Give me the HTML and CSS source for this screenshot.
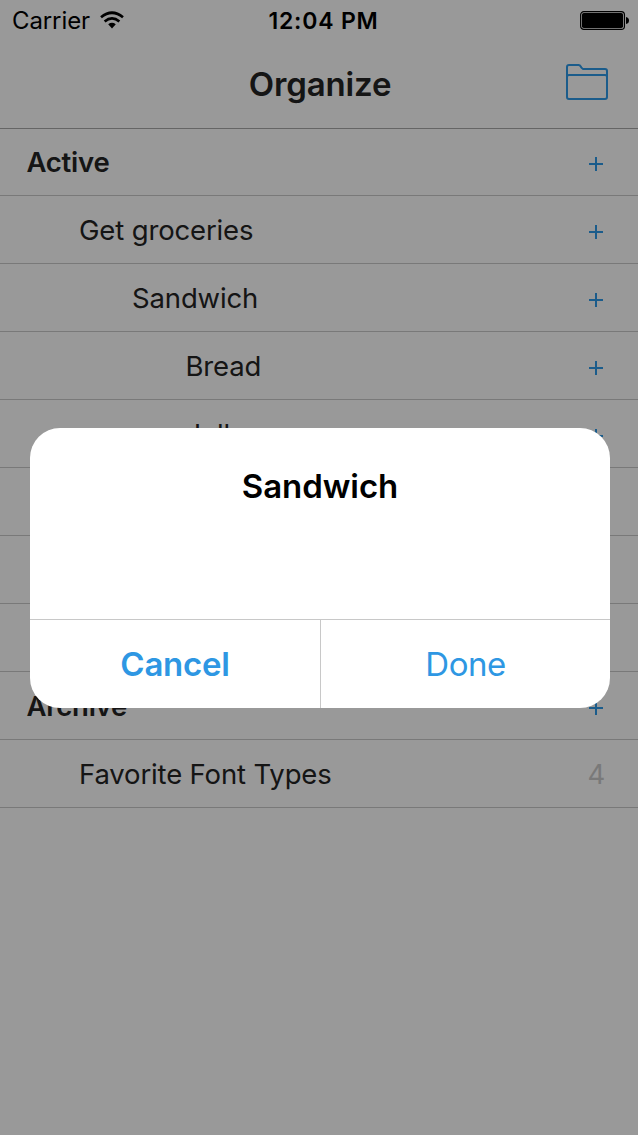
FILE: index.html
```html
<!DOCTYPE html>
<html lang="en">
<head>
<meta charset="utf-8">
<title>Organize</title>
<link rel="stylesheet" href="styles.css">
</head>
<body>
<div class="screen">
  <div class="status">
    <div class="carrier"><span>Carrier</span>
      <svg class="wifi" width="24" height="18" viewBox="0 0 26 19.5"><g fill="none" stroke="#000" stroke-width="2.9"><path d="M1.1 6.8Q13 -3 24.9 6.8"/><path d="M5 11.3Q13 4.8 21 11.3"/></g><path d="M8.9 14.4Q13 11.2 17.1 14.4L13 19Z"/></svg>
    </div>
    <div class="time">12:04 PM</div>
    <svg class="battery" width="50" height="20" viewBox="0 0 50 20"><rect x=".65" y=".65" width="43.8" height="17.8" rx="3.2" fill="none" stroke="#000" stroke-width="1.2"/><rect x="2" y="2" width="41" height="15" rx="1.8"/><path d="M46 6Q49 6.5 49 9.5T46 13Z"/></svg>
  </div>
  <header class="navbar">
    <h1>Organize</h1>
    <svg class="folder" width="44" height="38" viewBox="0 0 44 38" fill="none" stroke="#2d9ae8" stroke-width="2"><path d="M2 34V4Q2 2 4 2H13.5Q15 2 15.7 3.5T18 6H40Q42 6 42 8V34Q42 36 40 36H4Q2 36 2 34ZM2 14Q2 12 4 12H40Q42 12 42 14"/></svg>
  </header>
  <ul class="list">
    <li class="row group"><span>Active</span><i class="plus"></i></li>
    <li class="row l1"><span>Get groceries</span><i class="plus"></i></li>
    <li class="row l2"><span>Sandwich</span><i class="plus"></i></li>
    <li class="row l3"><span>Bread</span><i class="plus"></i></li>
    <li class="row l3"><span>Jelly</span><i class="plus"></i></li>
    <li class="row"></li>
    <li class="row"></li>
    <li class="row"></li>
    <li class="row group"><span>Archive</span><i class="plus"></i></li>
    <li class="row l1"><span>Favorite Font Types</span><b class="count">4</b></li>
  </ul>
</div>
<div class="overlay">
  <div class="dialog">
    <div class="dialog-title">Sandwich</div>
    <div class="actions">
      <button class="cancel">Cancel</button>
      <button class="done">Done</button>
    </div>
  </div>
</div>
</body>
</html>
```
FILE: styles.css
```css
* { box-sizing: border-box; }
body { margin: 0; background: #fff; font-family: Inter, "Liberation Sans", sans-serif; overflow: hidden; }
.screen { height: 1135px; color: #242424; }
.status { height: 40px; padding: 0 8px 0 12px; display: grid; grid-template-columns: 1fr auto 1fr; align-items: start; color: #000; font-size: 24px; line-height: 41px; }
.carrier { display: flex; align-items: flex-start; gap: 10px; letter-spacing: -.1px; }
.wifi { margin-top: 11px; }
.time { font-weight: 600; font-size: 23px; line-height: 42px; letter-spacing: .8px; padding-left: 5px; }
.battery { justify-self: end; margin-top: 11px; }
.navbar { height: 89px; border-bottom: 1px solid #a9a9a9; display: grid; grid-template-columns: 1fr auto 1fr; align-items: center; padding-right: 29px; padding-left: 31px; }
.navbar h1 { grid-column: 2; margin: 0; font-size: 33px; font-weight: 600; line-height: 88px; letter-spacing: -.15px; }
.folder { justify-self: end; margin-top: -5px; }
.list { list-style: none; margin: 0; padding: 0; }
.row { height: 68px; border-bottom: 1px solid #cacaca; padding: 0 35px 0 27px; display: flex; align-items: flex-start; justify-content: space-between; font-size: 27.5px; line-height: 68px; letter-spacing: -.15px; }
.row:first-child { height: 67px; line-height: 66px; }
.row:first-child .plus { margin-top: 28px; }
.group { font-weight: 600; letter-spacing: -.25px; padding-left: 26.5px; }
.l1 { padding-left: 79px; }
.l2 { padding-left: 132px; }
.l3 { padding-left: 185.5px; }
.plus { width: 14px; height: 14px; margin-top: 29px; background: linear-gradient(#2d9ae8, #2d9ae8) center / 14px 2px no-repeat, linear-gradient(#2d9ae8, #2d9ae8) center / 2px 14px no-repeat; }
.count { color: #cacaca; font-weight: 400; margin-right: -2px; }
.overlay { position: absolute; inset: 0; height: 1135px; background: rgba(0, 0, 0, .4); padding: 428px 28px 0 30px; }
.dialog { height: 280px; border-radius: 30px; background: #fff; overflow: hidden; display: flex; flex-direction: column; color: #000; }
.dialog-title { flex: 1; padding-top: 37px; text-align: center; font-size: 33px; line-height: 42px; font-weight: 600; letter-spacing: -.05px; }
.actions { height: 89px; border-top: 1px solid #c8c8c8; display: grid; grid-template-columns: 291px 1fr; }
.actions button { border: 0; padding: 0; background: none; color: #2e97e3; font-family: inherit; font-size: 33px; letter-spacing: -.25px; }
.actions .cancel { font-weight: 600; border-right: 1px solid #c8c8c8; }
.actions .done { letter-spacing: -.5px; }
```
